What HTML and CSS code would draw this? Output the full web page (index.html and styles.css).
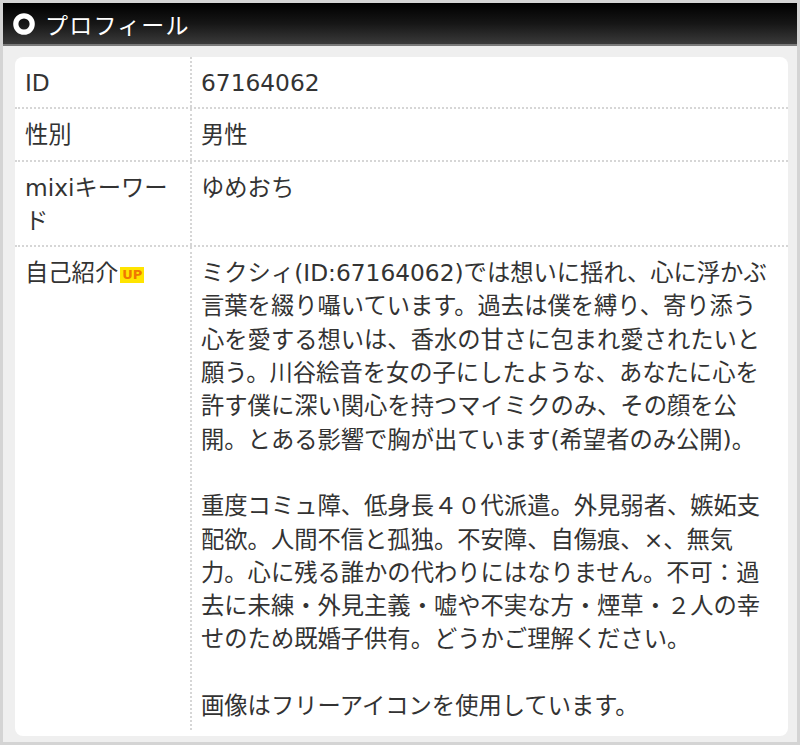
FILE: index.html
```html
<!DOCTYPE html>
<html lang="ja">
<head>
<meta charset="utf-8">
<link rel="stylesheet" href="styles.css">
</head>
<body>
<div class="frame">
  <div class="head">
    <svg class="ring" width="22" height="22" viewBox="0 0 22 22"><circle cx="11" cy="11" r="8.2" fill="none" stroke="#fff" stroke-width="5.2"/></svg>
    <span class="title">プロフィール</span>
  </div>
  <div class="panel">
    <div class="card">
      <div class="row">
        <div class="label">ID</div>
        <div class="value">67164062</div>
      </div>
      <div class="row">
        <div class="label">性別</div>
        <div class="value">男性</div>
      </div>
      <div class="row">
        <div class="label">mixiキーワー<br>ド</div>
        <div class="value">ゆめおち</div>
      </div>
      <div class="row last">
        <div class="label">自己紹介<span class="up">UP</span></div>
        <div class="value">ミクシィ(ID:67164062)では想いに揺れ、心に浮かぶ<br>言葉を綴り囁いています。過去は僕を縛り、寄り添う<br>心を愛する想いは、香水の甘さに包まれ愛されたいと<br>願う。川谷絵音を女の子にしたような、あなたに心を<br>許す僕に深い関心を持つマイミクのみ、その顔を公<br>開。とある影響で胸が出ています(希望者のみ公開)。<br><br>重度コミュ障、低身長４０代派遣。外見弱者、嫉妬支<br>配欲。人間不信と孤独。不安障、自傷痕、×、無気<br>力。心に残る誰かの代わりにはなりません。不可：過<br>去に未練・外見主義・嘘や不実な方・煙草・２人の幸<br>せのため既婚子供有。どうかご理解ください。<br><br>画像はフリーアイコンを使用しています。</div>
      </div>
    </div>
  </div>
</div>
</body>
</html>
```

FILE: styles.css
```css
html, body {
  margin: 0;
  padding: 0;
  background: #fff;
}
.frame {
  width: 794px;
  border: 3px solid #d4d4d4;
  font-family: "DejaVu Sans", "Noto Sans CJK JP", sans-serif;
  color: #333;
}
.head {
  height: 41px;
  background: linear-gradient(#000 0%, #161616 50%, #3a3a3a 100%);
  border-bottom: 2px solid #7a7a7a;
  display: flex;
  align-items: center;
  padding-left: 10px;
  gap: 10px;
}
.ring {
  display: block;
}
.title {
  color: #fff;
  font-size: 23px;
  font-family: "Noto Sans CJK JP", sans-serif;
  letter-spacing: 1.2px;
}
.panel {
  background: #efefef;
  padding: 11px 9px 6px 12px;
}
.card {
  background: #fff;
  border-radius: 8px;
  font-size: 23.3px;
  line-height: 33.3px;
}
.row {
  display: flex;
  border-bottom: 2px dotted #d6d6d6;
}
.row.last {
  border-bottom: none;
  padding-bottom: 6px;
}
.label {
  width: 165px;
  flex: none;
  padding: 9px 0 8px 10px;
  border-right: 2px dotted #d6d6d6;
}
.value {
  padding: 9px 0 8px 9px;
  white-space: nowrap;
}
.up {
  display: inline-block;
  background: #ffe400;
  color: #f07800;
  font-size: 13px;
  font-weight: bold;
  line-height: 16px;
  padding: 0 2px;
  margin-left: 2px;
  vertical-align: 2px;
}
```
